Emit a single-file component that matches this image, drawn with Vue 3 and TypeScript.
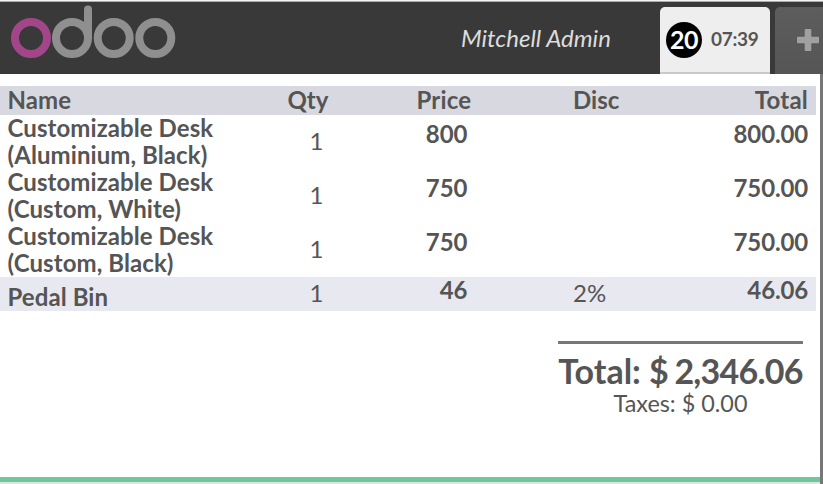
<script setup lang="ts">
interface OrderLine {
  name: string[]
  qty: number
  price: string
  disc?: string
  total: string
  selected?: boolean
}

const lines: OrderLine[] = [
  { name: ['Customizable Desk', '(Aluminium, Black)'], qty: 1, price: '800', total: '800.00' },
  { name: ['Customizable Desk', '(Custom, White)'], qty: 1, price: '750', total: '750.00' },
  { name: ['Customizable Desk', '(Custom, Black)'], qty: 1, price: '750', total: '750.00' },
  { name: ['Pedal Bin'], qty: 1, price: '46', disc: '2%', total: '46.06', selected: true },
]
</script>

<template>
  <div class="pos">
    <header class="topbar">
      <svg class="logo" width="176" height="60" viewBox="0 0 176 60" fill="none" stroke-width="8">
        <g stroke="#8f8f8f">
          <circle cx="72" cy="36" r="16" />
          <path d="M88 36V7.500" stroke-linecap="round" />
          <circle cx="113.7" cy="36" r="16" />
          <circle cx="155.3" cy="36" r="16" />
        </g>
        <circle cx="31" cy="36" r="16" stroke="#a24689" />
      </svg>
      <span class="user">Mitchell Admin</span>
      <div class="tab active">
        <span class="badge">20</span>
        <span class="time">07:39</span>
      </div>
      <div class="tab add">
        <svg width="22" height="22" viewBox="0 0 22 22">
          <path d="M8.700 0h4.600q1 0 1 1v6.700h6.700q1 0 1 1v4.600q0 1-1 1h-6.700v6.700q0 1-1 1H8.700q-1 0-1-1v-6.700H1q-1 0-1-1V8.700q0-1 1-1h6.700V1q0-1 1-1z" fill="#a0a0a0" />
        </svg>
      </div>
    </header>

    <main class="order">
      <div class="table">
        <div class="row head">
          <span class="name">Name</span>
          <span class="qty">Qty</span>
          <span class="price">Price</span>
          <span class="disc">Disc</span>
          <span class="total">Total</span>
        </div>
        <div v-for="(line, i) in lines" :key="i" class="row" :class="{ selected: line.selected }">
          <div class="name">
            <div v-for="part in line.name" :key="part">{{ part }}</div>
          </div>
          <span class="qty">{{ line.qty }}</span>
          <span class="price">{{ line.price }}</span>
          <span class="disc">{{ line.disc }}</span>
          <span class="total">{{ line.total }}</span>
        </div>
      </div>
      <div class="summary">
        <div class="grand">Total: <span class="amount">$ 2,346.06</span></div>
        <div class="taxes">Taxes: $ 0.00</div>
      </div>
      <div class="accent"></div>
    </main>
  </div>
</template>

<style>
body {
  margin: 0;
  overflow: hidden;
}
</style>

<style scoped>
.pos {
  width: 823px;
  height: 484px;
  box-sizing: border-box;
  display: flex;
  flex-direction: column;
  border-top: 1px solid #f4f4f4;
  background: #fff;
  color: #555;
  font-family: Lato, sans-serif;
  font-size: 24px;
  line-height: 27px;
  white-space: nowrap;
}
.topbar {
  height: 73px;
  box-sizing: border-box;
  flex: none;
  display: flex;
  align-items: flex-start;
  border-top: 1px solid #a9adad;
  background: #393939;
  overflow: hidden;
}
.logo {
  flex: none;
}
.user {
  width: 149px;
  margin: 22px 0 0 285px;
  color: #ddd;
  font-style: italic;
}
.tab {
  height: 67px;
  margin-top: 5px;
  box-sizing: border-box;
  flex: none;
  display: flex;
  border-radius: 5px 5px 0 0;
}
.active {
  width: 110px;
  margin-left: 50px;
  padding: 15px 0 0 6px;
  background: #eee;
  border-bottom: 2px solid #c9c9c9;
}
.badge {
  width: 36px;
  height: 36px;
  border-radius: 50%;
  background: #000;
  color: #fff;
  font-size: 25px;
  font-weight: 700;
  line-height: 35px;
  text-align: center;
  letter-spacing: -0.5px;
}
.time {
  margin-left: 9px;
  font-size: 19px;
  font-weight: 700;
  line-height: 33px;
  letter-spacing: -0.3px;
}
.add {
  width: 60px;
  margin-left: 5px;
  padding: 22px 0 0 22px;
  background: linear-gradient(#5d5d5d, #555);
}
.order {
  flex: 1;
  display: flex;
  flex-direction: column;
  padding-top: 12px;
  border-right: 3px solid #777;
}
.table {
  width: 816px;
}
.row {
  display: grid;
  grid-template-columns: 287.5px 129px 156.500px 110px 125px;
  grid-template-rows: 100%;
  align-items: center;
  height: 54px;
  box-sizing: border-box;
  padding-bottom: 2px;
}
.name {
  padding-left: 7.5px;
  letter-spacing: 0.08px;
}
.name,
.price,
.total,
.head {
  font-weight: 700;
}
.qty {
  padding: 0 0 1px 22px;
}
.price {
  width: 51px;
  text-align: right;
}
.price,
.total {
  padding-bottom: 16px;
}
.total {
  text-align: right;
  letter-spacing: -0.15px;
}
.head {
  height: 29px;
  background: #d8d8e0;
}
.head .qty,
.head .price,
.head .total {
  padding: 0;
}
.head .total {
  letter-spacing: 0.2px;
}
.head .price {
  width: auto;
  text-align: left;
  letter-spacing: 0.2px;
}
.selected {
  height: 34px;
  background: #e8e8f1;
}
.selected .name {
  padding-top: 7px;
}
.selected .disc {
  padding-bottom: 1px;
}
.selected .price,
.selected .total {
  padding-bottom: 7px;
}
.summary {
  width: 245px;
  margin: 30px 0 0 558px;
  padding-top: 8px;
  border-top: 3px solid #777;
  text-align: center;
}
.grand {
  font-size: 34px;
  font-weight: 700;
  line-height: 38px;
}
.amount {
  letter-spacing: -0.75px;
  word-spacing: -1.2px;
}
.taxes {
  font-size: 23.4px;
}
.accent {
  height: 5px;
  margin-top: auto;
  background: #6ec89b;
  border-bottom: 2px solid #e2e2e2;
}
</style>
